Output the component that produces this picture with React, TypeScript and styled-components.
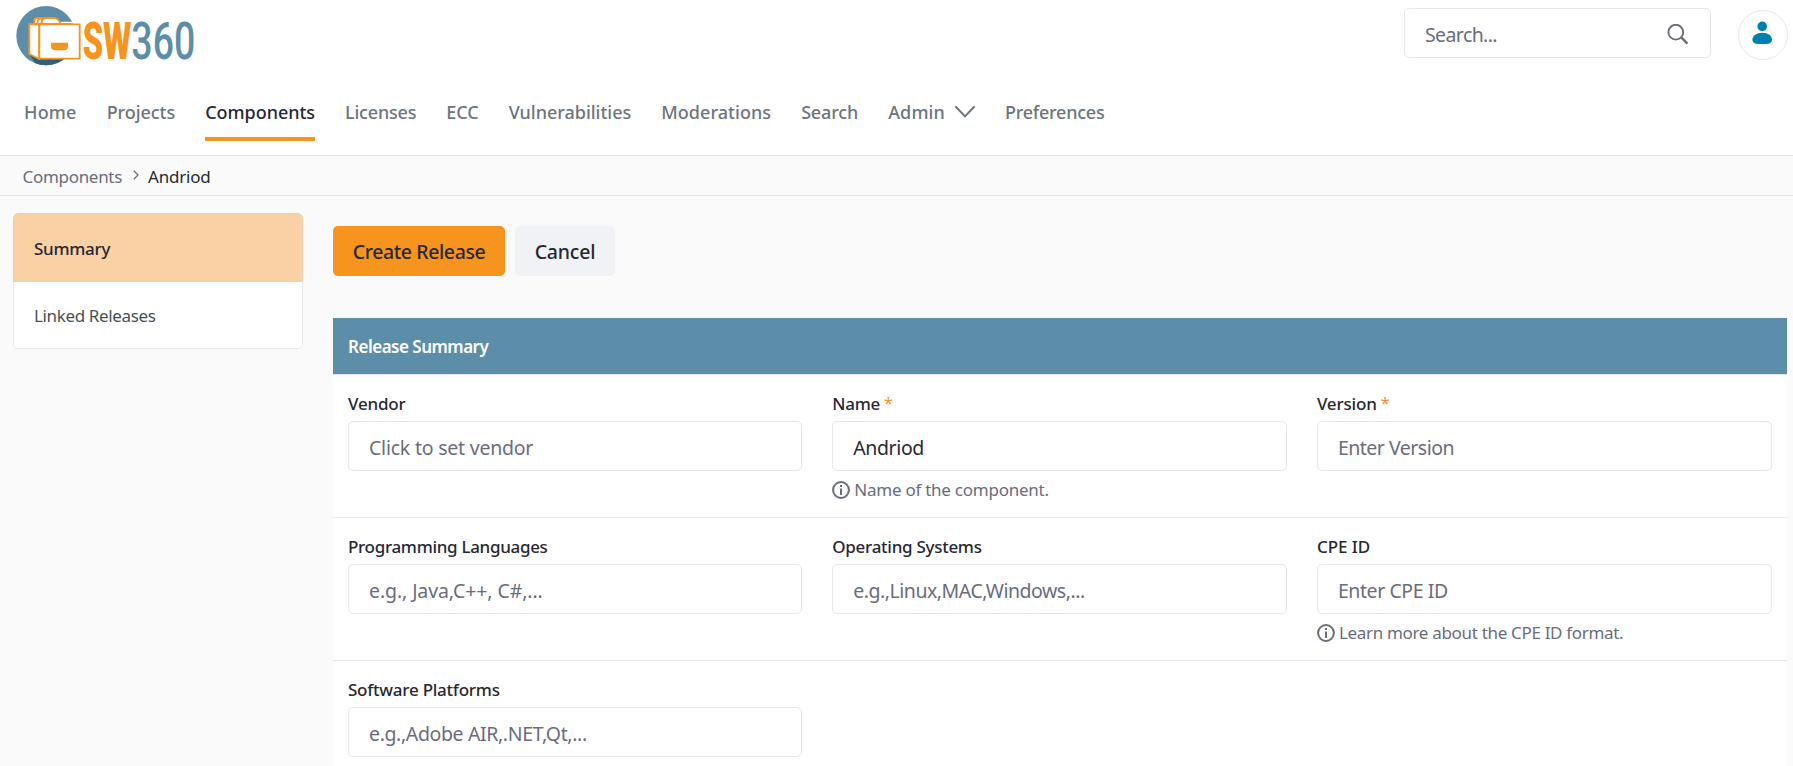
import React from "react";
import styled, { createGlobalStyle } from "styled-components";

const GlobalStyle = createGlobalStyle`
  *, *::before, *::after { box-sizing: border-box; }
  html, body { margin: 0; height: 766px; overflow: hidden; }
  body {
    background: #fafafa;
    color: #272833;
    font-family: "Noto Sans", sans-serif;
    font-size: 17px;
    line-height: 24px;
  }
`;

const tracked = ({ $track = 0 }: { $track?: number }) => `letter-spacing: ${$track}px;`;

const Header = styled.header`
  height: 156px;
  background: #fff;
  border-bottom: 1px solid #e4e4e6;
`;

const TopBar = styled.div`
  display: flex;
  align-items: flex-start;
  justify-content: space-between;
  height: 80px;
  padding-right: 5px;
`;

const TopTools = styled.div`
  display: flex;
  gap: 27px;
  padding-top: 8px;
`;

const SearchBox = styled.label`
  display: flex;
  align-items: center;
  width: 307px;
  height: 50px;
  padding: 2px 22px 0 20px;
  border: 1px solid #e7e7ed;
  border-radius: 5px;
  background: #fff;
`;

const SearchInput = styled.input`
  flex: 1;
  min-width: 0;
  padding: 2px 0 0;
  border: 0;
  outline: 0;
  background: none;
  font: 400 19.5px/26px "Noto Sans", sans-serif;
  letter-spacing: -0.6px;
  &::placeholder { color: #6b6c7e; opacity: 1; }
`;

const Avatar = styled.button`
  display: grid;
  place-items: center;
  width: 50px;
  height: 50px;
  margin-top: 2px;
  padding: 0 2px 5px 0;
  border: 1px solid #e7e7ed;
  border-radius: 50%;
  background: #fff;
`;

const Nav = styled.nav`
  display: flex;
  gap: 30px;
  padding: 20px 0 0 24px;
`;

const NavLink = styled.a<{ $active?: boolean; $track?: number }>`
  display: flex;
  align-items: center;
  gap: 10px;
  height: 41px;
  padding-bottom: 13px;
  border-bottom: 4px solid ${(p) => (p.$active ? "#f7941e" : "transparent")};
  color: ${(p) => (p.$active ? "#272833" : "#6c757d")};
  font-size: 18px;
  font-weight: 500;
  white-space: nowrap;
  ${tracked}
`;

const Breadcrumbs = styled.div`
  display: flex;
  align-items: center;
  height: 40px;
  padding: 2px 0 0 22.5px;
  border-bottom: 1px solid #e4e4e6;
`;

const Crumb = styled.span<{ $current?: boolean; $track?: number }>`
  color: ${(p) => (p.$current ? "#272833" : "#6b6c7e")};
  ${tracked}
`;

const CrumbArrow = styled.svg`
  margin: 0 9px 4px 11px;
`;

const Body = styled.div`
  display: flex;
  align-items: flex-start;
  gap: 30px;
  padding: 17px 6px 0 13px;
`;

const SideMenu = styled.aside`
  width: 290px;
  border-radius: 5px;
  background: #fff;
  overflow: hidden;
`;

const SideItem = styled.div<{ $active?: boolean; $track?: number }>`
  display: flex;
  align-items: center;
  height: ${(p) => (p.$active ? 69 : 67)}px;
  padding: 2px 20px 0;
  border: 1px solid ${(p) => (p.$active ? "#eccfae" : "#e7e7ed")};
  border-top-width: ${(p) => (p.$active ? 1 : 0)}px;
  border-radius: ${(p) => (p.$active ? "5px 5px 0 0" : "0 0 5px 5px")};
  background: ${(p) => (p.$active ? "#fad1a4" : "#fff")};
  color: ${(p) => (p.$active ? "#272833" : "#495057")};
  font-weight: ${(p) => (p.$active ? 500 : 400)};
  ${tracked}
`;

const Main = styled.main`
  flex: 1;
  padding-top: 13px;
`;

const Actions = styled.div`
  display: flex;
  gap: 10px;
  margin-bottom: 42px;
`;

const Button = styled.button<{ $primary?: boolean; $track?: number }>`
  width: ${(p) => (p.$primary ? 172 : 100)}px;
  height: 50px;
  padding: 2px 0 0;
  border: 0;
  border-radius: 5px;
  background: ${(p) => (p.$primary ? "#f7941e" : "#f1f2f5")};
  color: #272833;
  font: 500 19.5px/26px "Noto Sans", sans-serif;
  white-space: nowrap;
  ${tracked}
`;

const Panel = styled.section`
  background: #fff;
`;

const PanelTitle = styled.h2`
  display: flex;
  align-items: center;
  height: 57px;
  margin: 0;
  padding: 2px 15px 0;
  border-bottom: 1px solid #e7e7ed;
  background: #5d8ea9;
  background-clip: padding-box;
  color: #fff;
  font-size: 17px;
  font-weight: 600;
  letter-spacing: -0.5px;
`;

const FieldRow = styled.div`
  display: grid;
  grid-template-columns: 454.3px 454.6px 1fr;
  column-gap: 30px;
  height: 143px;
  padding: 17px 15.5px 0 15px;
  border-bottom: 1px solid #e7e7ed;
`;

const Field = styled.div`
  min-width: 0;
`;

const Label = styled.label<{ $track?: number }>`
  display: flex;
  gap: 4px;
  height: 23px;
  margin-bottom: 6px;
  font-weight: 500;
  line-height: 23px;
  ${tracked}
`;

const Required = styled.span`
  color: #ff8d2e;
  font-size: 16px;
  font-weight: 400;
`;

const Input = styled.input<{ $track?: number }>`
  display: block;
  width: 100%;
  height: 50px;
  padding: 3px 20px 0;
  border: 1px solid #e7e7ed;
  border-radius: 5px;
  outline: 0;
  background: #fff;
  color: #272833;
  font: 400 19.5px/26px "Noto Sans", sans-serif;
  ${tracked}
  &::placeholder { color: #6b6c7e; opacity: 1; }
`;

const Help = styled.div<{ $track?: number }>`
  display: flex;
  align-items: center;
  gap: 4px;
  height: 22px;
  margin-top: 8px;
  color: #6b6c7e;
  white-space: nowrap;
  ${tracked}
`;

const HelpIcon = styled.svg`
  flex: none;
`;

function Logo() {
  return (
    <svg width="220" height="80" viewBox="0 0 660 240" aria-label="SW360">
      <defs>
        <clipPath id="disc"><circle cx="138" cy="107" r="89" /></clipPath>
      </defs>
      <circle cx="138" cy="107" r="89" fill="#5d8ea9" />
      <path d="M88 162L118 178H230V200H112Z" fill="#2f6080" clipPath="url(#disc)" />
      <path d="M182 65H242V180H236V70H180Z" fill="#fff" />
      <g fill="#fff" stroke="#f7941e" strokeWidth="5.5" strokeLinejoin="round">
        <path d="M103 72V64Q103 54 113 54H164Q170 54 174 59L180 66V72Z" />
        <path d="M113 72V66Q113 55 125 55M125 72V66Q125 55 137 55" fill="none" />
        <path d="M88 72L118 74V177L88 162Z" />
        <path d="M118 73H239V176H118Z" />
      </g>
      <path d="M153 128H204V138Q204 151 191 151H166Q153 151 153 138Z" fill="#f7941e" />
      <g fontFamily="Roboto, sans-serif" fontSize="154">
        <text transform="translate(248 178) scale(0.635 1)" fill="#f7941e" fontWeight="900">SW</text>
        <text transform="translate(394 178) scale(0.73 1)" fill="#5d8ea9" fontWeight="500">360</text>
      </g>
    </svg>
  );
}

const NAV = [
  { label: "Home", track: 0.2 },
  { label: "Projects", track: -0.05 },
  { label: "Components", track: -0.03, active: true },
  { label: "Licenses", track: -0.2 },
  { label: "ECC", track: 0 },
  { label: "Vulnerabilities", track: -0.02 },
  { label: "Moderations", track: 0.05 },
  { label: "Search", track: -0.15 },
  { label: "Admin", track: 0.15, menu: true },
  { label: "Preferences", track: -0.25 },
];

type FieldSpec = {
  label: string;
  labelTrack: number;
  placeholder?: string;
  value?: string;
  track: number;
  required?: boolean;
  help?: string;
  helpTrack?: number;
};

const ROWS: FieldSpec[][] = [
  [
    { label: "Vendor", labelTrack: -0.2, placeholder: "Click to set vendor", track: -0.22 },
    { label: "Name", labelTrack: -0.27, value: "Andriod", track: -0.4, required: true, help: "Name of the component.", helpTrack: -0.25 },
    { label: "Version", labelTrack: -0.17, placeholder: "Enter Version", track: -0.5, required: true },
  ],
  [
    { label: "Programming Languages", labelTrack: -0.31, placeholder: "e.g., Java,C++, C#,...", track: -0.1 },
    { label: "Operating Systems", labelTrack: -0.28, placeholder: "e.g.,Linux,MAC,Windows,...", track: -0.48 },
    { label: "CPE ID", labelTrack: -0.05, placeholder: "Enter CPE ID", track: -0.42, help: "Learn more about the CPE ID format.", helpTrack: -0.32 },
  ],
  [{ label: "Software Platforms", labelTrack: -0.24, placeholder: "e.g.,Adobe AIR,.NET,Qt,...", track: -0.37 }],
];

export default function App() {
  return (
    <>
      <GlobalStyle />
      <Header>
        <TopBar>
          <Logo />
          <TopTools>
            <SearchBox>
              <SearchInput placeholder="Search..." />
              <svg width="21" height="21" viewBox="0 0 21 21" fill="none" stroke="#6b6c7e" strokeWidth="1.9">
                <circle cx="8.8" cy="8.2" r="7.4" />
                <path d="M14.2 13.4L20.4 19.6" strokeWidth="2.4" />
              </svg>
            </SearchBox>
            <Avatar>
              <svg width="20" height="24" viewBox="0 0 20 24" fill="#0080b0">
                <circle cx="10.2" cy="5.4" r="4.8" />
                <path d="M10.2 11.8C16 11.8 20 14.8 20 18.6C20 21.6 17.6 23 14.6 23H5.6C2.6 23 0.4 21.6 0.4 18.6C0.4 14.8 4.4 11.8 10.2 11.8Z" />
              </svg>
            </Avatar>
          </TopTools>
        </TopBar>
        <Nav>
          {NAV.map((n) => (
            <NavLink key={n.label} $active={n.active} $track={n.track}>
              {n.label}
              {n.menu && (
                <svg width="20" height="12" viewBox="0 0 20 12" fill="none" stroke="#6c757d" strokeWidth="2">
                  <path d="M1 1L10 10.4L19 1" strokeLinecap="round" />
                </svg>
              )}
            </NavLink>
          ))}
        </Nav>
      </Header>
      <Breadcrumbs>
        <Crumb $track={-0.3}>Components</Crumb>
        <CrumbArrow width="6" height="10" viewBox="0 0 6 10" fill="none" stroke="#6b6c7e" strokeWidth="1.3">
          <path d="M0.8 0.8L5 5L0.8 9.2" />
        </CrumbArrow>
        <Crumb $current $track={-0.2}>Andriod</Crumb>
      </Breadcrumbs>
      <Body>
        <SideMenu>
          <SideItem $active $track={-0.28}>Summary</SideItem>
          <SideItem $track={-0.36}>Linked Releases</SideItem>
        </SideMenu>
        <Main>
          <Actions>
            <Button $primary $track={-0.4}>Create Release</Button>
            <Button $track={-0.2}>Cancel</Button>
          </Actions>
          <Panel>
            <PanelTitle>Release Summary</PanelTitle>
            {ROWS.map((row, i) => (
              <FieldRow key={i}>
                {row.map((f) => (
                  <Field key={f.label}>
                    <Label $track={f.labelTrack}>
                      {f.label}
                      {f.required && <Required>*</Required>}
                    </Label>
                    <Input placeholder={f.placeholder} defaultValue={f.value} $track={f.track} />
                    {f.help && (
                      <Help $track={f.helpTrack}>
                        <HelpIcon width="18" height="18" viewBox="0 0 18 18">
                          <circle cx="9" cy="9" r="7.9" fill="none" stroke="#6b6c7e" strokeWidth="2" />
                          <path d="M8 7.4H10V14H8ZM8 4H10V6H8Z" fill="#6b6c7e" />
                        </HelpIcon>
                        {f.help}
                      </Help>
                    )}
                  </Field>
                ))}
              </FieldRow>
            ))}
          </Panel>
        </Main>
      </Body>
    </>
  );
}
